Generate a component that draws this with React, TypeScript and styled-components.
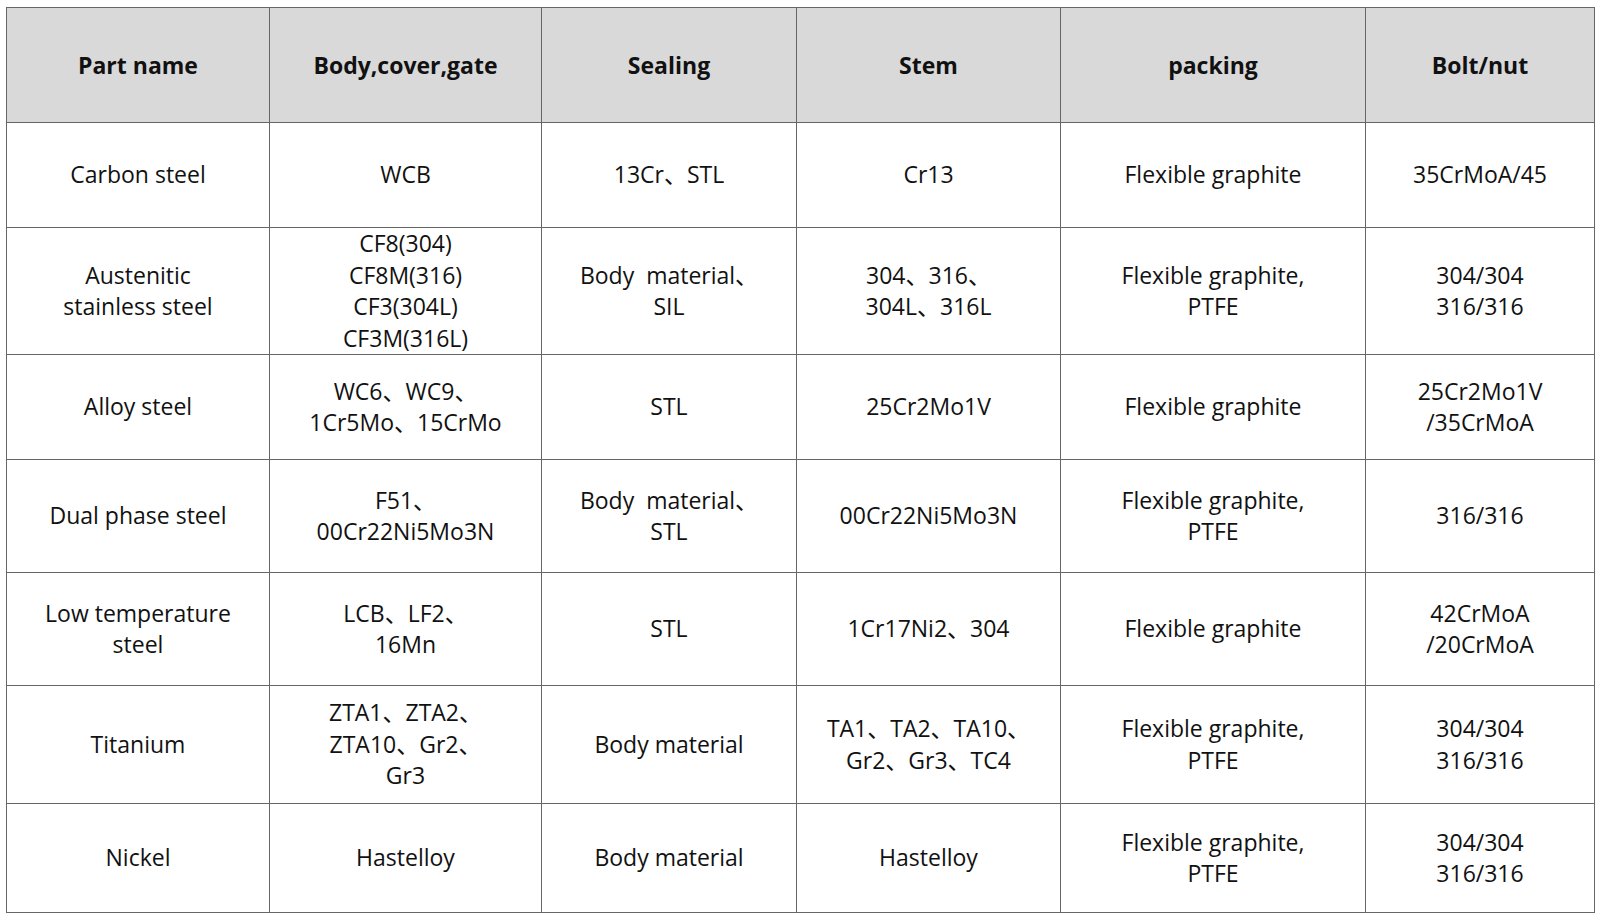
import React from 'react';
import styled, { createGlobalStyle } from 'styled-components';

const columns = [
    { label: 'Part name', width: 263 },
    { label: 'Body,cover,gate', width: 272 },
    { label: 'Sealing', width: 255 },
    { label: 'Stem', width: 264 },
    { label: 'packing', width: 305 },
    { label: 'Bolt/nut', width: 229 },
];

const rows: { height: number; cells: string[] }[] = [
    { height: 105, cells: ['Carbon steel', 'WCB', '13Cr、STL', 'Cr13', 'Flexible graphite', '35CrMoA/45'] },
    { height: 126, cells: ['Austenitic\nstainless steel', 'CF8(304)\nCF8M(316)\nCF3(304L)\nCF3M(316L)', 'Body  material、\nSIL', '304、316、\n304L、316L', 'Flexible graphite,\nPTFE', '304/304\n316/316'] },
    { height: 105, cells: ['Alloy steel', 'WC6、WC9、\n1Cr5Mo、15CrMo', 'STL', '25Cr2Mo1V', 'Flexible graphite', '25Cr2Mo1V\n/35CrMoA'] },
    { height: 113, cells: ['Dual phase steel', 'F51、\n00Cr22Ni5Mo3N', 'Body  material、\nSTL', '00Cr22Ni5Mo3N', 'Flexible graphite,\nPTFE', '316/316'] },
    { height: 113, cells: ['Low temperature\nsteel', 'LCB、LF2、\n16Mn', 'STL', '1Cr17Ni2、304', 'Flexible graphite', '42CrMoA\n/20CrMoA'] },
    { height: 118, cells: ['Titanium', 'ZTA1、ZTA2、\nZTA10、Gr2、\nGr3', 'Body material', 'TA1、TA2、TA10、\nGr2、Gr3、TC4', 'Flexible graphite,\nPTFE', '304/304\n316/316'] },
    { height: 109, cells: ['Nickel', 'Hastelloy', 'Body material', 'Hastelloy', 'Flexible graphite,\nPTFE', '304/304\n316/316'] },
];

const App = () => {
    return (
        <>
            <GlobalStyle />
            <Page>
                <MaterialTable>
                    <colgroup>
                        {columns.map(c => <col key={c.label} style={{ width: c.width }} />)}
                    </colgroup>
                    <thead>
                        <HeaderRow>
                            {columns.map(c => <HeaderCell key={c.label}>{c.label}</HeaderCell>)}
                        </HeaderRow>
                    </thead>
                    <tbody>
                        {rows.map((r, i) => (
                            <BodyRow key={i} style={{ height: r.height }}>
                                {r.cells.map((c, j) => <BodyCell key={j}>{c}</BodyCell>)}
                            </BodyRow>
                        ))}
                    </tbody>
                </MaterialTable>
            </Page>
        </>
    );
};

export default App;

/*-----------------STYLES-----------------*/
const GlobalStyle = createGlobalStyle`
    html, body {
        margin: 0;
        padding: 0;
        background: #ffffff;
        overflow: hidden;
    }
    body {
        font-family: "Open Sans", "Noto Sans CJK SC", sans-serif;
        color: #111111;
    }
`;

const Page = styled.div`
    padding: 7px 0 0 6px;
`;

const MaterialTable = styled.table`
    border-collapse: collapse;
    table-layout: fixed;
    width: 1588px;
    border: 1.5px solid #666666;
`;

const HeaderRow = styled.tr`
    height: 115px;
    background: #d9d9d9;
`;

const HeaderCell = styled.th`
    border: 1.5px solid #666666;
    font-size: 23px;
    font-weight: 700;
    text-align: center;
    vertical-align: middle;
    padding: 0;
    color: #111111;
`;

const BodyRow = styled.tr``;

const BodyCell = styled.td`
    border: 1.5px solid #666666;
    font-size: 23px;
    line-height: 31.5px;
    text-align: center;
    vertical-align: middle;
    white-space: pre-wrap;
    padding: 0;
`;
